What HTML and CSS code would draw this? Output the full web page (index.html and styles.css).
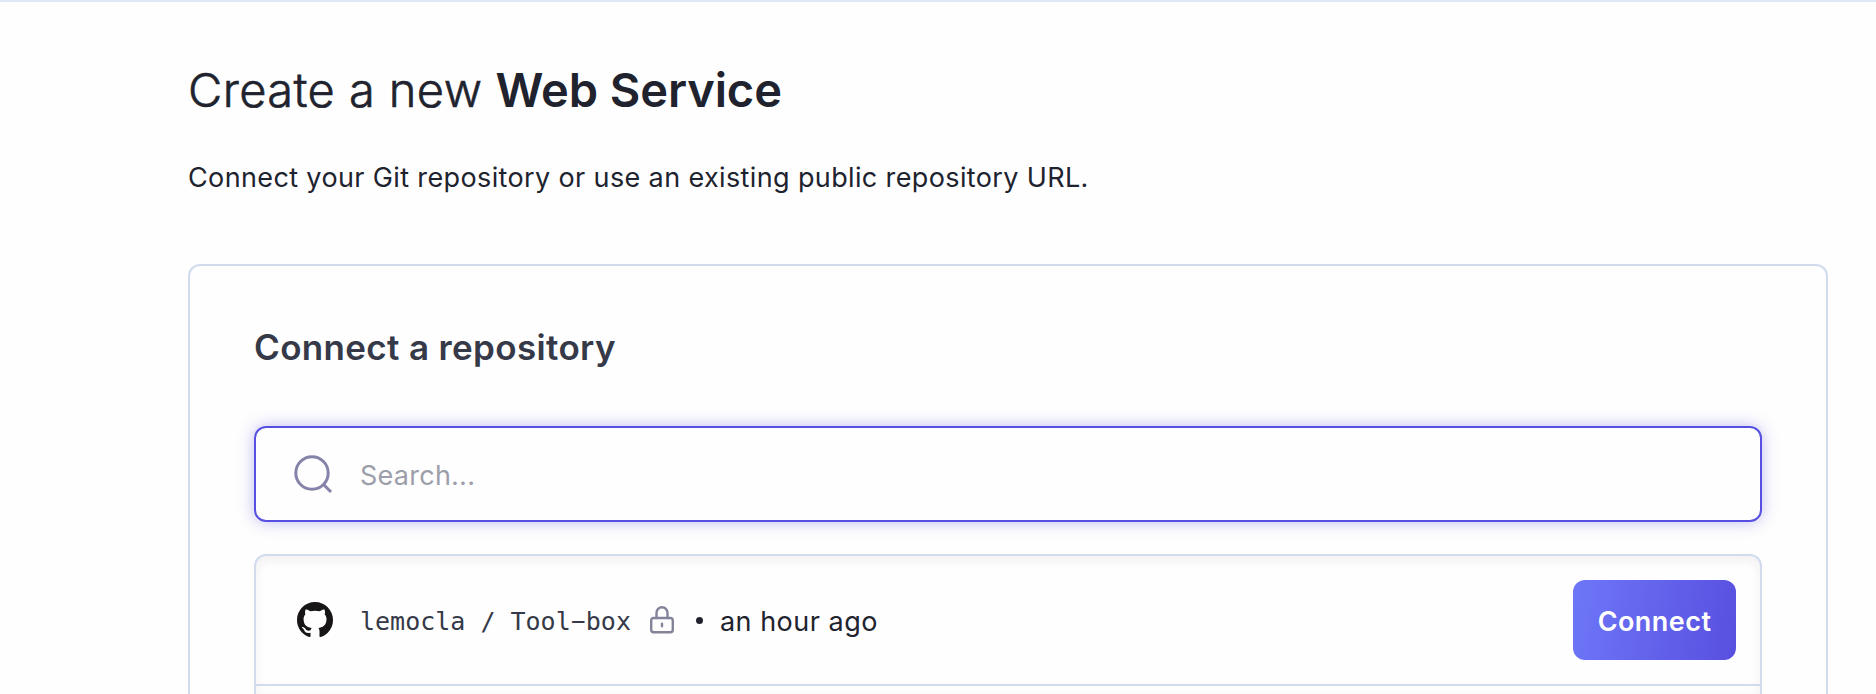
FILE: index.html
```html
<!DOCTYPE html>
<html lang="en">
<head>
<meta charset="utf-8">
<title>Create a new Web Service</title>
<link rel="stylesheet" href="styles.css">
</head>
<body>
<main class="page">
  <h1 class="title"><span class="title-light">Create a new</span> <strong class="title-strong">Web Service</strong></h1>
  <p class="subtitle">Connect your Git repository or use an existing public repository URL.</p>
  <section class="card">
    <h2 class="card-title">Connect a repository</h2>
    <label class="search">
      <svg class="search-icon" viewBox="0 0 40 40" fill="none" stroke="currentColor" stroke-width="3"><circle cx="18" cy="18" r="16.2"/><path d="M29.5 29.5L37 37"/></svg>
      <span class="placeholder">Search...</span>
    </label>
    <ul class="repos">
      <li class="repo">
        <svg class="github" viewBox="0 0 16 16" fill="currentColor"><path d="M8 0C3.58 0 0 3.58 0 8c0 3.54 2.29 6.53 5.47 7.59.4.07.55-.17.55-.38 0-.19-.01-.82-.01-1.49-2.01.37-2.53-.49-2.69-.94-.09-.23-.48-.94-.82-1.13-.28-.15-.68-.52-.01-.53.63-.01 1.08.58 1.23.82.72 1.21 1.87.87 2.33.66.07-.52.28-.87.51-1.07-1.78-.2-3.64-.89-3.64-3.95 0-.87.31-1.59.82-2.15-.08-.2-.36-1.02.08-2.12 0 0 .67-.21 2.2.82.64-.18 1.32-.27 2-.27s1.36.09 2 .27c1.53-1.04 2.2-.82 2.2-.82.44 1.1.16 1.92.08 2.12.51.56.82 1.27.82 2.15 0 3.07-1.87 3.75-3.65 3.95.29.25.54.73.54 1.48 0 1.07-.01 1.93-.01 2.2 0 .21.15.46.55.38A8.01 8.01 0 0 0 16 8c0-4.42-3.58-8-8-8z"/></svg>
        <span class="repo-name">lemocla / Tool<span class="dash">-</span>box</span>
        <svg class="lock" viewBox="0 0 24 28" fill="none" stroke="currentColor" stroke-width="2.4" stroke-linecap="round"><rect x="1.2" y="12" width="21.6" height="14.3" rx="2.6"/><path d="M6.5 12V6.8a5.5 5.5 0 0 1 11 0V12M12 17.8v2.4"/></svg>
        <span class="dot"></span>
        <span class="time">an hour ago</span>
        <button class="connect">Connect</button>
      </li>
    </ul>
  </section>
</main>
</body>
</html>
```
FILE: styles.css
```css
* { box-sizing: border-box; }
html { overflow: hidden; }
body {
  margin: 0;
  height: 694px;
  overflow: hidden;
  background: #fefefe;
  border-top: 2px solid #dfe8f6;
  color: #20232e;
  font-family: Inter, "Liberation Sans", sans-serif;
}
.page { padding: 58px 48px 0 188px; }
.title {
  margin: 0;
  height: 60px;
  font-size: 47px;
  line-height: 60px;
  font-weight: 300;
  white-space: nowrap;
}
.title-light { letter-spacing: .42px; -webkit-text-stroke: .6px; }
.title-strong { font-weight: 600; letter-spacing: -.1px; }
.subtitle {
  margin: 38px 0 0;
  height: 40px;
  font-size: 27px;
  line-height: 40px;
  letter-spacing: .37px;
  white-space: nowrap;
}
.card {
  margin-top: 66px;
  height: 430px;
  padding: 59px 64px 0;
  border: 2px solid #d2dbee;
  border-bottom: 0;
  border-radius: 12px 12px 0 0;
}
.card-title {
  margin: 0;
  height: 44px;
  color: #353948;
  font-size: 35px;
  line-height: 44px;
  font-weight: 600;
  letter-spacing: .35px;
}
.search {
  display: flex;
  align-items: center;
  gap: 26px;
  height: 96px;
  margin-top: 57px;
  padding: 2px 0 0 38px;
  border: 2px solid #564fe0;
  border-radius: 12px;
  box-shadow: 0 0 16px rgba(86, 79, 224, .38);
}
.search-icon { width: 40px; height: 40px; color: #8583a9; }
.placeholder { color: #9c9eaa; font-size: 27px; letter-spacing: .25px; }
.repos {
  list-style: none;
  height: 140px;
  margin: 32px 0 0;
  padding: 0;
  border: 2px solid #d2dbee;
  border-bottom: 0;
  border-radius: 12px 12px 0 0;
  box-shadow: inset 0 4px 12px rgba(0, 0, 0, .06);
}
.repo {
  display: flex;
  align-items: center;
  height: 130px;
  padding: 0 24px 0 41px;
  border-bottom: 2px solid #d2dbee;
}
.github { width: 36px; height: 36px; color: #171516; }
.repo-name {
  margin: 2px 0 0 27px;
  color: #353948;
  font: 25px "DejaVu Sans Mono", monospace;
}
.dash { vertical-align: 1px; line-height: 1; text-shadow: 3px 0, -3px 0; }
.lock { width: 24px; height: 28px; margin-left: 19px; color: #83849a; }
.dot { width: 7px; height: 7px; margin: 1px 0 0 22px; border-radius: 50%; background: #20232e; }
.time { margin: 2px 0 0 17px; font-size: 27px; letter-spacing: .5px; }
.connect {
  width: 163px;
  height: 80px;
  margin-left: auto;
  padding: 2px 0 0;
  border: 0;
  border-radius: 12px;
  background: linear-gradient(100deg, #6e77f8, #584fdf);
  color: #fff;
  font: 600 27px Inter, "Liberation Sans", sans-serif;
  letter-spacing: .45px;
}
```
